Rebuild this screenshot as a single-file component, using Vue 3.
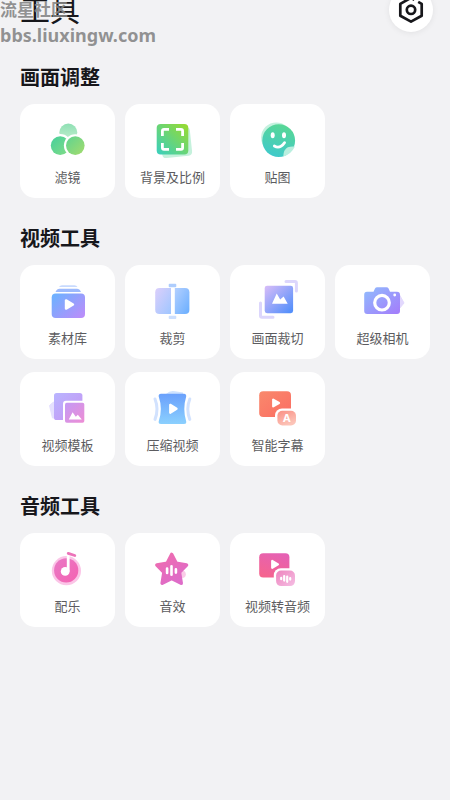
<script setup>
const sections = [
  {
    title: '画面调整',
    tools: [
      { id: 'filter', label: '滤镜' },
      { id: 'ratio', label: '背景及比例' },
      { id: 'sticker', label: '贴图' },
    ],
  },
  {
    title: '视频工具',
    tools: [
      { id: 'library', label: '素材库' },
      { id: 'trim', label: '裁剪' },
      { id: 'crop', label: '画面裁切' },
      { id: 'camera', label: '超级相机' },
      { id: 'template', label: '视频模板' },
      { id: 'compress', label: '压缩视频' },
      { id: 'subtitle', label: '智能字幕' },
    ],
  },
  {
    title: '音频工具',
    tools: [
      { id: 'music', label: '配乐' },
      { id: 'effect', label: '音效' },
      { id: 'convert', label: '视频转音频' },
    ],
  },
]

const gradients = [
  { id: 'gTop', from: '#8fe0b4', to: '#c4efd0', dir: [0, 0, 0, 1] },
  { id: 'gLeft', from: '#45cf9c', to: '#84dd86', dir: [0, 0, 1, 1] },
  { id: 'gRight', from: '#5ed392', to: '#a5dc6c', dir: [0, 0, 1, 1] },
  { id: 'gRatio', from: '#38cfc0', to: '#9bdb2c', dir: [0, 1, 1, 0] },
  { id: 'gSmile', from: '#58d795', to: '#3fc9cc', dir: [0.6, 0, 0.3, 1] },
  { id: 'gLibrary', from: '#6cb2ff', to: '#bb8dfa', dir: [0, 0.1, 1, 0.9] },
  { id: 'gTrimL', from: '#dccffb', to: '#9fc6ff', dir: [0, 0, 1, 1] },
  { id: 'gTrimR', from: '#b4d0ff', to: '#69aeff', dir: [0, 0, 1, 1] },
  { id: 'gCrop', from: '#d9bdf8', to: '#4b8cfb', dir: [0, 0, 1, 1] },
  { id: 'gCamera', from: '#90bdfd', to: '#a47bfb', dir: [0, 0, 1, 1] },
  { id: 'gTemplate', from: '#b9b5ff', to: '#c694f2', dir: [0, 0, 1, 1] },
  { id: 'gPhoto', from: '#c39af5', to: '#ee8dd4', dir: [0, 0, 1, 1] },
  { id: 'gCompress', from: '#6aa0fc', to: '#8bd0fe', dir: [0.5, 0, 0.5, 1] },
  { id: 'gSubtitle', from: '#f9896c', to: '#fb6d63', dir: [0, 0, 1, 1] },
  { id: 'gBadge', from: '#fa8f84', to: '#fcc4b8', dir: [0, 0, 0.5, 1] },
  { id: 'gMusic', from: '#e879c6', to: '#f562b1', dir: [0, 0, 1, 1] },
  { id: 'gStar', from: '#f06cae', to: '#de6cc8', dir: [0, 0, 0.6, 1] },
  { id: 'gConvert', from: '#e561b4', to: '#f5648f', dir: [0.7, 0, 0.3, 1] },
  { id: 'gWave', from: '#ee83bd', to: '#f5bfe4', dir: [0, 0, 1, 1] },
]
</script>

<template>
  <main class="page">
    <svg class="defs" aria-hidden="true">
      <defs>
        <linearGradient
          v-for="g in gradients"
          :id="g.id"
          :key="g.id"
          :x1="g.dir[0]"
          :y1="g.dir[1]"
          :x2="g.dir[2]"
          :y2="g.dir[3]"
        >
          <stop offset="0" :stop-color="g.from" />
          <stop offset="1" :stop-color="g.to" />
        </linearGradient>
      </defs>
    </svg>

    <header class="header">
      <h1 class="title">工具</h1>
      <button class="settings" type="button" aria-label="设置">
        <svg width="30" height="30" viewBox="0 0 30 30" fill="none" stroke="#17171b" stroke-width="2.7" stroke-linejoin="round">
          <path d="M18.4 4.8 L15 2.8 L4.3 8.9 V20.7 L15 26.6 L25.7 20.7 V8.9 L22.2 6.9" />
          <circle cx="15" cy="14.8" r="4.2" />
        </svg>
      </button>
      <div class="watermark">
        <span class="mark-name">流星社区</span>
        <span class="mark-site">bbs.liuxingw.com</span>
      </div>
    </header>

    <section v-for="section in sections" :key="section.title" class="section">
      <h2 class="heading">{{ section.title }}</h2>
      <div class="grid">
        <button v-for="tool in section.tools" :key="tool.id" class="card" type="button">
          <svg class="icon" viewBox="0 0 95 64" aria-hidden="true">
            <g v-if="tool.id === 'filter'">
              <circle cx="48.3" cy="28.6" r="9" fill="url(#gTop)" />
              <circle cx="40.2" cy="41.6" r="11.6" fill="#fff" />
              <circle cx="40.2" cy="41.6" r="9.4" fill="url(#gLeft)" />
              <circle cx="55.3" cy="41.6" r="11.4" fill="#fff" />
              <circle cx="55.3" cy="41.6" r="9.3" fill="url(#gRight)" />
            </g>

            <g v-else-if="tool.id === 'ratio'">
              <rect x="36" y="24" width="30" height="29" rx="4" fill="#c5f1dc" transform="rotate(-6 51 38)" />
              <rect x="31.7" y="20" width="31.6" height="30.6" rx="4" fill="url(#gRatio)" />
              <path d="M37.4 32 V27 Q37.4 25.4 39 25.4 H44 M51 25.4 H56 Q57.6 25.4 57.6 27 V32 M57.6 39 V43.8 Q57.6 45.4 56 45.4 H51 M44 45.4 H39 Q37.4 45.4 37.4 43.8 V39" fill="none" stroke="#fff" stroke-width="2.8" />
            </g>

            <g v-else-if="tool.id === 'sticker'">
              <circle cx="46.3" cy="33.6" r="15.2" fill="#c5f1df" />
              <circle cx="48.7" cy="36.6" r="16.4" fill="url(#gSmile)" />
              <path d="M53 54 L66 54 L66 42 Z" fill="#fff" />
              <path d="M53.2 52.8 Q53.4 45.4 57.8 43.2 Q61 42.2 65 42.6 Q61 50.5 53.2 52.8 Z" fill="#b9efdf" />
              <ellipse cx="42.7" cy="31.2" rx="2" ry="3" fill="#fff" />
              <ellipse cx="54" cy="31.2" rx="2" ry="3" fill="#fff" />
              <path d="M44.3 42 Q49.8 45.4 54.6 38.6" fill="none" stroke="#fff" stroke-width="2.7" stroke-linecap="round" />
            </g>

            <g v-else-if="tool.id === 'library'">
              <path d="M39 22 Q40 20.3 42 20.3 H54.5 Q56.5 20.3 57.5 22 Z" fill="#c8dafe" />
              <path d="M35.5 27 Q37 23.7 39.5 23.7 H57 Q59.5 23.7 61 27 Z" fill="#9dbafd" />
              <rect x="31.7" y="28.4" width="33.3" height="24.6" rx="4" fill="url(#gLibrary)" />
              <path d="M46 35.4 V43.6 L53 39.5 Z" fill="#fff" stroke="#fff" stroke-width="2.4" stroke-linejoin="round" />
            </g>

            <g v-else-if="tool.id === 'trim'">
              <path d="M46 23 H34.5 Q30.2 23 30.2 27.3 V44.7 Q30.2 49 34.5 49 H46 Z" fill="url(#gTrimL)" />
              <path d="M49.8 23 H60 Q64.4 23 64.4 27.3 V44.7 Q64.4 49 60 49 H49.8 Z" fill="url(#gTrimR)" />
              <rect x="43.7" y="18.8" width="7.6" height="3.4" rx="1" fill="#aecdfd" />
              <rect x="43.7" y="50.7" width="7.6" height="3.2" rx="1" fill="#ccdffe" />
            </g>

            <g v-else-if="tool.id === 'crop'">
              <path d="M56 16.6 H64.9 Q66.4 16.6 66.4 18.1 V26 M30.5 38 V50.8 Q30.5 52.3 32 52.3 H43" fill="none" stroke="#dcd6fc" stroke-width="3" stroke-linecap="round" />
              <rect x="34.7" y="20.7" width="28.4" height="27.5" rx="2.4" fill="url(#gCrop)" />
              <path d="M42 38.7 L46.7 28.6 L50.2 34.6 L53.6 31.4 L57.7 38.7 Z" fill="#fff" />
            </g>

            <g v-else-if="tool.id === 'camera'">
              <path d="M64 29 L69 38 L64 44 Z" fill="#e2d8fd" stroke="#e2d8fd" stroke-width="1" stroke-linejoin="round" />
              <path d="M32 26.7 H38.5 L40 23.6 Q40.7 22.2 42.2 22.2 H51.4 Q52.9 22.2 53.6 23.6 L55 26.7 H62 Q65 26.7 65 29.7 V46 Q65 49 62 49 H32.2 Q29.2 49 29.2 46 V29.7 Q29.2 26.7 32 26.7 Z" fill="url(#gCamera)" />
              <circle cx="47" cy="37.7" r="7.3" fill="none" stroke="#fff" stroke-width="3.2" />
              <circle cx="59.7" cy="30" r="1.4" fill="#fff" />
            </g>

            <g v-else-if="tool.id === 'template'">
              <path d="M33.5 30 L29.5 33.5 L32.5 46 H36 Z" fill="#e5e0fe" stroke="#e5e0fe" stroke-linejoin="round" />
              <rect x="34" y="21" width="28.4" height="27" rx="2.6" fill="url(#gTemplate)" />
              <rect x="43" y="28.7" width="23.4" height="24" rx="3" fill="#fff" />
              <rect x="45" y="30.8" width="19.3" height="20" rx="1.8" fill="url(#gPhoto)" />
              <path d="M48.8 47.6 L52.6 40.2 L55.8 44.8 L57.8 42.8 L61.8 47.6 Z" fill="#fff" />
            </g>

            <g v-else-if="tool.id === 'compress'">
              <path d="M41 22 Q45 18 50 19.2 L58 20.5 V24 H41 Z" fill="#cfe3ff" />
              <path d="M36 21.7 H59 Q61.4 21.7 61.2 24.4 Q57.4 37 61.2 49.5 Q61.6 52 59 52 H36 Q33.3 52 33.7 49.5 Q38 37 33.7 24.4 Q33.4 21.7 36 21.7 Z" fill="url(#gCompress)" />
              <path d="M30 27 Q34 37 30 47.4 M64.8 27 Q60.8 37 64.8 47.4" fill="none" stroke="#d2e2fe" stroke-width="3" stroke-linecap="round" />
              <path d="M45.2 32.8 V40.8 L51.6 36.8 Z" fill="#fff" stroke="#fff" stroke-width="2.2" stroke-linejoin="round" />
            </g>

            <g v-else-if="tool.id === 'subtitle'">
              <rect x="29.2" y="19.2" width="31.8" height="25.8" rx="4" fill="url(#gSubtitle)" />
              <path d="M43.2 27.6 V34.4 L49 31 Z" fill="#fff" stroke="#fff" stroke-width="2.2" stroke-linejoin="round" />
              <rect x="45" y="36.4" width="23.4" height="19.4" rx="7" fill="#fff" />
              <rect x="47.4" y="38.7" width="18.6" height="14.8" rx="5" fill="url(#gBadge)" />
              <text class="badge-letter" x="56.8" y="50.2" text-anchor="middle">A</text>
            </g>

            <g v-else-if="tool.id === 'music'">
              <circle cx="46.4" cy="37.7" r="14.6" fill="#fbc5e7" />
              <circle cx="46.2" cy="37.4" r="12.1" fill="url(#gMusic)" />
              <path d="M48.2 21 V38.5" stroke="#fff" stroke-width="2.8" />
              <circle cx="45.2" cy="38.4" r="4.4" fill="#fff" />
              <path d="M48.2 20.4 L54.8 22.5" stroke="#ec73b9" stroke-width="2.8" stroke-linecap="round" />
            </g>

            <g v-else-if="tool.id === 'effect'">
              <circle cx="57" cy="41.3" r="3.8" fill="#facbe7" />
              <path d="M46.7 21.5 L51.2 30.4 L61.5 32 L54.4 39.2 L56.2 50.2 L46.7 45.4 L37.2 50.2 L39 39.2 L31.9 32 L42.2 30.4 Z" fill="url(#gStar)" stroke="url(#gStar)" stroke-width="3.6" stroke-linejoin="round" />
              <path d="M42.1 35.6 V40 M46.5 33.2 V41.8 M50.9 36.2 V39.6" stroke="#fff" stroke-width="2.6" stroke-linecap="round" />
            </g>

            <g v-else>
              <rect x="29.2" y="20.2" width="30.2" height="24.2" rx="4" fill="url(#gConvert)" />
              <path d="M42.2 28 V34.8 L48 31.4 Z" fill="#fff" stroke="#fff" stroke-width="2.2" stroke-linejoin="round" />
              <rect x="43.8" y="35.2" width="23.4" height="20" rx="7" fill="#fff" />
              <rect x="46.1" y="37.5" width="18.9" height="15.6" rx="5" fill="url(#gWave)" />
              <path d="M51.2 44.8 V46.2 M54.2 43 V47.6 M57.2 43.6 V48.8 M60.2 45 V46.6" stroke="#fff" stroke-width="2.2" stroke-linecap="round" />
            </g>
          </svg>
          <span class="label">{{ tool.label }}</span>
        </button>
      </div>
    </section>
  </main>
</template>

<style>
body {
  background: #f2f2f4;
}
</style>

<style scoped>
.page {
  position: relative;
  box-sizing: border-box;
  min-height: 100vh;
  padding: 0 20px 32px;
  overflow: hidden;
  background: #f2f2f4;
  font-family: 'Noto Sans CJK SC', sans-serif;
}

.defs {
  position: absolute;
  width: 0;
  height: 0;
}

/* The header is partly scrolled past the top edge. */
.header {
  display: flex;
  align-items: center;
  justify-content: space-between;
  height: 44px;
  margin: -12px -3px 31px 0;
}

.title {
  margin: 0;
  padding-bottom: 4px;
  font-size: 30px;
  line-height: 40px;
  font-weight: 400;
  color: #17171b;
}

.settings {
  display: flex;
  align-items: center;
  justify-content: center;
  width: 44px;
  height: 44px;
  padding: 0;
  border: 0;
  border-radius: 50%;
  background: #fff;
  box-shadow: 0 1px 6px rgba(0, 0, 0, 0.07);
}

.watermark {
  position: absolute;
  top: -4px;
  left: 0;
  display: flex;
  flex-direction: column;
  color: rgba(132, 132, 132, 0.88);
  font-weight: 700;
}

.mark-name {
  font-size: 17px;
  line-height: 26px;
}

.mark-site {
  font-family: 'Noto Sans', sans-serif;
  font-size: 18px;
  line-height: 26px;
}

.section {
  margin-bottom: 26px;
}

.heading {
  margin: 0 0 13px;
  font-size: 20px;
  line-height: 28px;
  font-weight: 700;
  color: #17171b;
}

.grid {
  display: grid;
  grid-template-columns: repeat(4, 1fr);
  gap: 13px 10px;
}

.card {
  display: flex;
  flex-direction: column;
  align-items: center;
  height: 94px;
  padding: 0;
  border: 0;
  border-radius: 15px;
  background: #fff;
  font-family: inherit;
}

.icon {
  width: 95px;
  height: 64px;
}

.label {
  font-size: 13px;
  line-height: 18px;
  color: #5c5c60;
  white-space: nowrap;
}

.badge-letter {
  font-family: 'Noto Sans', sans-serif;
  font-size: 11px;
  font-weight: 700;
  fill: #fff;
}
</style>
